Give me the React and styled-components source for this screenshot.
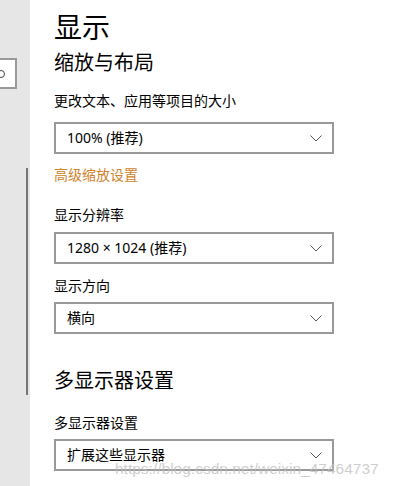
import React from "react";
import styled, { createGlobalStyle } from "styled-components";

const GlobalStyle = createGlobalStyle`
  html, body {
    margin: 0;
    padding: 0;
    background: #ffffff;
  }
  body {
    font-family: "Segoe UI", "Noto Sans", "Noto Sans CJK SC", sans-serif;
    color: #000;
  }
`;

const Select = ({ value, gap }) => (
  <Box $gap={gap}>
    <BoxText>{value}</BoxText>
    <svg width="12" height="7" viewBox="0 0 12 7">
      <path d="M0.5 0.5 L6 6 L11.5 0.5" fill="none" stroke="#555" strokeWidth="1" />
    </svg>
  </Box>
);

const App = () => {
  return (
    <>
      <GlobalStyle />
      <Page>
        <Sidebar>
          <SearchBox>
            <svg width="10" height="10" viewBox="0 0 10 10">
              <circle cx="5" cy="5" r="3.5" fill="none" stroke="#444" strokeWidth="1" />
            </svg>
          </SearchBox>
          <ScrollThumb />
        </Sidebar>
        <Main>
          <Title>显示</Title>
          <Heading $gap={4}>缩放与布局</Heading>
          <Label $gap={14}>更改文本、应用等项目的大小</Label>
          <Select gap={12} value="100% (推荐)" />
          <Link>高级缩放设置</Link>
          <Label $gap={20}>显示分辨率</Label>
          <Select gap={8} value="1280 × 1024 (推荐)" />
          <Label $gap={11}>显示方向</Label>
          <Select gap={7} value="横向" />
          <Heading $gap={32}>多显示器设置</Heading>
          <Label $gap={18}>多显示器设置</Label>
          <Select gap={7} value="扩展这些显示器" />
        </Main>
        {/* csdn watermark drawn over the last dropdown */}
        <Watermark>https://blog.csdn.net/weixin_47464737</Watermark>
      </Page>
    </>
  );
};
export default App;

const Page = styled.div`
  position: relative;
  width: 394px;
  height: 486px;
  overflow: hidden;
  display: flex;
`;
const Sidebar = styled.div`
  width: 30px;
  flex-shrink: 0;
  background-color: #e6e6e6;
  display: flex;
  flex-direction: column;
  overflow: hidden;
`;
const SearchBox = styled.div`
  margin-top: 58px;
  margin-left: -20px;
  width: 19px;
  height: 27px;
  padding-left: 14px;
  border: 2px solid #999;
  background: #fff;
  display: flex;
  align-items: center;
`;
const ScrollThumb = styled.div`
  align-self: flex-end;
  margin-right: 2px;
  margin-top: 79px;
  width: 2px;
  height: 227px;
  background-color: #767676;
`;
const Main = styled.div`
  flex: 1;
  padding-left: 24px;
  display: flex;
  flex-direction: column;
  align-items: flex-start;
`;
const Title = styled.div`
  margin-top: 8px;
  font-family: "Noto Sans CJK SC", sans-serif;
  font-size: 28px;
  line-height: 36px;
`;
const Heading = styled.div`
  margin-top: ${(p) => p.$gap}px;
  font-family: "Noto Sans CJK SC", sans-serif;
  font-size: 20px;
  line-height: 28px;
`;
const Label = styled.div`
  margin-top: ${(p) => p.$gap}px;
  font-family: "Noto Sans CJK SC", sans-serif;
  font-size: 14px;
  line-height: 20px;
`;
const Link = styled.div`
  margin-top: 10px;
  font-family: "Noto Sans CJK SC", sans-serif;
  font-size: 14px;
  line-height: 20px;
  color: #d0822b;
`;
const Box = styled.div`
  margin-top: ${(p) => p.$gap}px;
  width: 280px;
  height: 32px;
  box-sizing: border-box;
  border: 2px solid #999;
  display: flex;
  align-items: center;
  justify-content: space-between;
  padding: 0 10px 0 11px;
`;
const BoxText = styled.span`
  font-size: 14px;
  line-height: 20px;
`;
const Watermark = styled.div`
  position: absolute;
  left: 115px;
  top: 460px;
  font-family: "Liberation Sans", Arial, sans-serif;
  font-size: 15.5px;
  line-height: 18px;
  color: rgba(190, 190, 190, 0.75);
  white-space: nowrap;
  pointer-events: none;
`;
